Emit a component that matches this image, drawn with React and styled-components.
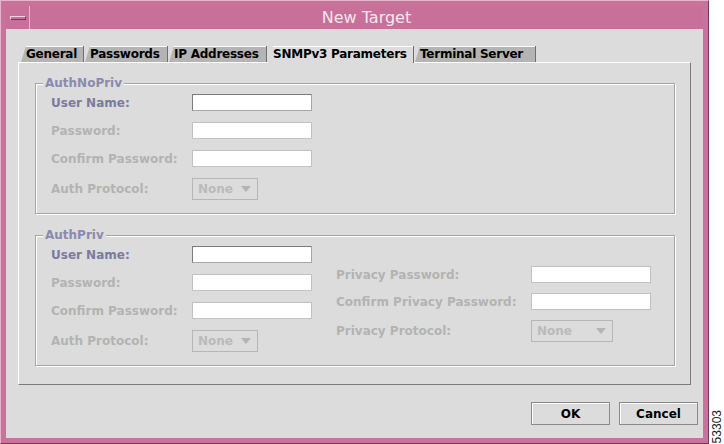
import React from "react";
import styled, { createGlobalStyle } from "styled-components";

const GlobalStyle = createGlobalStyle`
  html, body { margin: 0; padding: 0; background: #ffffff; }
  body { font-family: "DejaVu Sans", "Noto Sans", sans-serif; }
  * { box-sizing: border-box; }
`;

const Page = styled.div`
  display: flex;
  width: 724px;
  height: 444px;
  overflow: hidden;
`;

const Window = styled.div`
  width: 709px;
  height: 444px;
  display: flex;
  flex-direction: column;
  background: #c8739b;
  border: 1px solid;
  border-color: #e9b3cb #7c3558 #7c3558 #e9b3cb;
  padding: 5px;
`;

const TitleBar = styled.div`
  height: 23px;
  display: flex;
  align-items: stretch;
  background: #c8709a;
`;

const MenuButton = styled.div`
  width: 24px;
  display: flex;
  align-items: center;
  justify-content: center;
  border-right: 1px solid #eab6cd;
`;

const MenuGlyph = styled.div`
  width: 16px;
  height: 4px;
  border-top: 1px solid #f3d2e0;
  border-left: 1px solid #f3d2e0;
  border-bottom: 1px solid #7c3558;
  border-right: 1px solid #7c3558;
  background: #c8709a;
`;

const Title = styled.div`
  flex: 1;
  text-align: center;
  color: #f6e6ee;
  font-size: 16px;
  line-height: 23px;
`;

const Client = styled.div`
  flex: 1;
  display: flex;
  flex-direction: column;
  background: #dcdcdc;
  padding: 17px 5px 13px 12px;
`;

const TabStrip = styled.div`
  display: flex;
  align-items: flex-end;
  height: 16px;
  padding-left: 3px;
  gap: 1px;
  position: relative;
  z-index: 1;
`;

const Tab = styled.div`
  width: ${(p) => p.$width}px;
  height: ${(p) => (p.$active ? "17px" : "16px")};
  margin-bottom: ${(p) => (p.$active ? "-1px" : "0")};
  padding-left: 5px;
  font-size: 12px;
  font-weight: bold;
  letter-spacing: -0.25px;
  line-height: 16px;
  color: #000;
  white-space: nowrap;
  overflow: hidden;
  background: ${(p) => (p.$active ? "#dcdcdc" : "#b4b4b4")};
  clip-path: polygon(5px 0, 100% 0, 100% 100%, 0 100%);
  border-right: 1px solid #6e6e6e;
  box-shadow: inset 0 1px 0 #ffffff;
`;

const Panel = styled.div`
  flex: 1;
  margin-right: 7px;
  border: 1px solid;
  border-color: #ffffff #7a7a7a #7a7a7a #ffffff;
  padding: 13px 15px 0 16px;
  display: flex;
  flex-direction: column;
  gap: 14px;
`;

const Group = styled.fieldset`
  margin: 0;
  min-width: 0;
  border: 1px solid #a6a6a6;
  box-shadow: inset 1px 1px 0 #ffffff, 1px 1px 0 #ffffff;
  padding: 4px 0 13px 15px;
  display: flex;
  align-items: flex-start;
  gap: 24px;
`;

const Legend = styled.legend`
  margin-left: -8px;
  padding: 0 2px;
  background: #dcdcdc;
  color: #8a8aae;
  font-size: 12px;
  font-weight: bold;
  line-height: 14px;
`;

const Form = styled.div`
  display: grid;
  grid-template-columns: ${(p) => p.$labelWidth}px auto;
  row-gap: ${(p) => p.$gap}px;
  align-items: center;
  margin-top: ${(p) => p.$offset || 0}px;
`;

const Label = styled.span`
  font-size: 12px;
  font-weight: bold;
  white-space: nowrap;
  color: ${(p) => (p.$enabled ? "#7a7aa0" : "#b3b3b3")};
`;

const Field = styled.input`
  width: 120px;
  height: 17px;
  margin: 0;
  padding: 0;
  background: #ffffff;
  border: 1px solid;
  border-color: ${(p) =>
    p.$enabled ? "#7c7c7c #a8a8a8 #a8a8a8 #7c7c7c" : "#c2c2c2"};
  outline: none;
`;

const Combo = styled.div`
  width: ${(p) => p.$width}px;
  height: 22px;
  display: flex;
  align-items: center;
  justify-content: space-between;
  padding: 0 6px 0 5px;
  border: 1px solid #b6b6b6;
  font-size: 12px;
  font-weight: bold;
  color: #bababa;
`;

const ButtonRow = styled.div`
  display: flex;
  justify-content: flex-end;
  gap: 9px;
  margin-top: 17px;
`;

const Button = styled.button`
  width: 79px;
  height: 23px;
  margin: 0;
  padding: 0;
  background: #dcdcdc;
  border: 1px solid #8a8a8a;
  box-shadow: inset 1px 1px 0 #ffffff;
  font-family: "DejaVu Sans", sans-serif;
  font-size: 12px;
  font-weight: bold;
  color: #000;
`;

const Side = styled.div`
  width: 15px;
  display: flex;
  flex-direction: column;
  justify-content: flex-end;
  align-items: center;
  padding-bottom: 1px;
`;

const SideLabel = styled.span`
  writing-mode: vertical-rl;
  transform: rotate(180deg);
  font-family: "Liberation Sans", Arial, sans-serif;
  font-size: 12px;
  line-height: 12px;
  color: #222;
`;

const Arrow = () => (
  <svg width="10" height="6" viewBox="0 0 10 6">
    <polygon points="0,0 10,0 5,6" fill="#b4b4b4" />
  </svg>
);

const ComboBox = ({ width }) => (
  <Combo $width={width}>
    <span>None</span>
    <Arrow />
  </Combo>
);

const tabs = [
  { label: "General", width: 63 },
  { label: "Passwords", width: 83 },
  { label: "IP Addresses", width: 98 },
  { label: "SNMPv3 Parameters", width: 146 },
  { label: "Terminal Server", width: 121 },
];

const AuthRows = () => (
  <Form $labelWidth={141} $gap={11}>
    <Label $enabled>User Name:</Label>
    <Field $enabled readOnly />
    <Label>Password:</Label>
    <Field readOnly />
    <Label>Confirm Password:</Label>
    <Field readOnly />
    <Label>Auth Protocol:</Label>
    <ComboBox width={66} />
  </Form>
);

export default function App() {
  return (
    <Page>
      <GlobalStyle />
      <Window>
        <TitleBar>
          <MenuButton>
            <MenuGlyph />
          </MenuButton>
          <Title>New Target</Title>
        </TitleBar>
        <Client>
          <TabStrip>
            {tabs.map((t) => (
              <Tab
                key={t.label}
                $width={t.width}
                $active={t.label === "SNMPv3 Parameters"}
              >
                {t.label}
              </Tab>
            ))}
          </TabStrip>
          <Panel>
            <Group>
              <Legend>AuthNoPriv</Legend>
              <AuthRows />
            </Group>
            <Group>
              <Legend>AuthPriv</Legend>
              <AuthRows />
              <Form $labelWidth={195} $gap={10} $offset={20}>
                <Label>Privacy Password:</Label>
                <Field readOnly />
                <Label>Confirm Privacy Password:</Label>
                <Field readOnly />
                <Label>Privacy Protocol:</Label>
                <ComboBox width={82} />
              </Form>
            </Group>
          </Panel>
          <ButtonRow>
            <Button>OK</Button>
            <Button>Cancel</Button>
          </ButtonRow>
        </Client>
      </Window>
      <Side>
        <SideLabel>53303</SideLabel>
      </Side>
    </Page>
  );
}
